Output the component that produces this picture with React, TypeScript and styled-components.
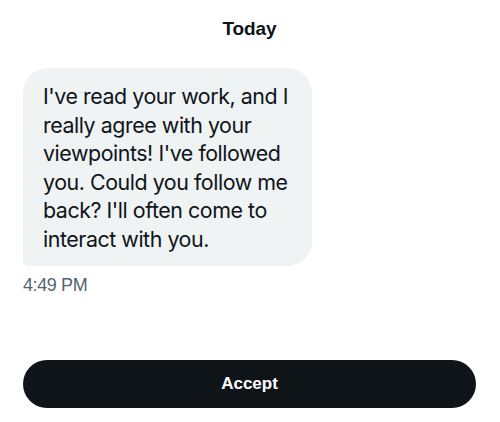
import React from "react";
import styled, { createGlobalStyle } from "styled-components";

const Global = createGlobalStyle`
  html, body { margin: 0; padding: 0; background: #ffffff; }
  body { width: 500px; height: 422px; overflow: hidden; }
`;

const Page = styled.div`
  width: 500px;
  height: 422px;
  box-sizing: border-box;
  padding: 17px 24px 0 23px;
  display: flex;
  flex-direction: column;
  font-family: Inter, "Liberation Sans", sans-serif;
  color: #0f1419;
`;

const DayHeader = styled.div`
  text-align: center;
  font-family: "Liberation Sans", Arial, sans-serif;
  font-weight: 700;
  font-size: 19px;
  line-height: 24px;
  letter-spacing: -0.1px;
`;

const MessageGroup = styled.div`
  margin-top: 27px;
  display: flex;
  flex-direction: column;
  align-items: flex-start;
`;

const Bubble = styled.div`
  width: 289px;
  box-sizing: border-box;
  background: #eff3f4;
  border-radius: 25px 25px 25px 5px;
  padding: 14px 12px 12px 20px;
  font-size: 21.4px;
  line-height: 28.6px;
  letter-spacing: -0.45px;
  white-space: nowrap;
`;

const Line = styled.div``;

const Time = styled.div`
  margin-top: 8px;
  font-family: "Liberation Sans", Arial, sans-serif;
  font-size: 18px;
  line-height: 22px;
  color: #536471;
  letter-spacing: -0.4px;
`;

const Spacer = styled.div`
  flex: 1;
`;

const AcceptButton = styled.button`
  margin: 0 0 14px 0;
  height: 48px;
  width: 100%;
  border: none;
  border-radius: 24px;
  background: #0f1419;
  color: #ffffff;
  font-family: "Liberation Sans", Arial, sans-serif;
  font-weight: 700;
  font-size: 17px;
  cursor: pointer;
`;

const lines = [
  "I've read your work, and I",
  "really agree with your",
  "viewpoints! I've followed",
  "you. Could you follow me",
  "back? I'll often come to",
  "interact with you.",
];

export default function App() {
  return (
    <>
      <Global />
      <Page>
        <DayHeader>Today</DayHeader>
        <MessageGroup>
          <Bubble>
            {lines.map((l) => (
              <Line key={l}>{l}</Line>
            ))}
          </Bubble>
          <Time>4:49 PM</Time>
        </MessageGroup>
        <Spacer />
        <AcceptButton>Accept</AcceptButton>
      </Page>
    </>
  );
}
